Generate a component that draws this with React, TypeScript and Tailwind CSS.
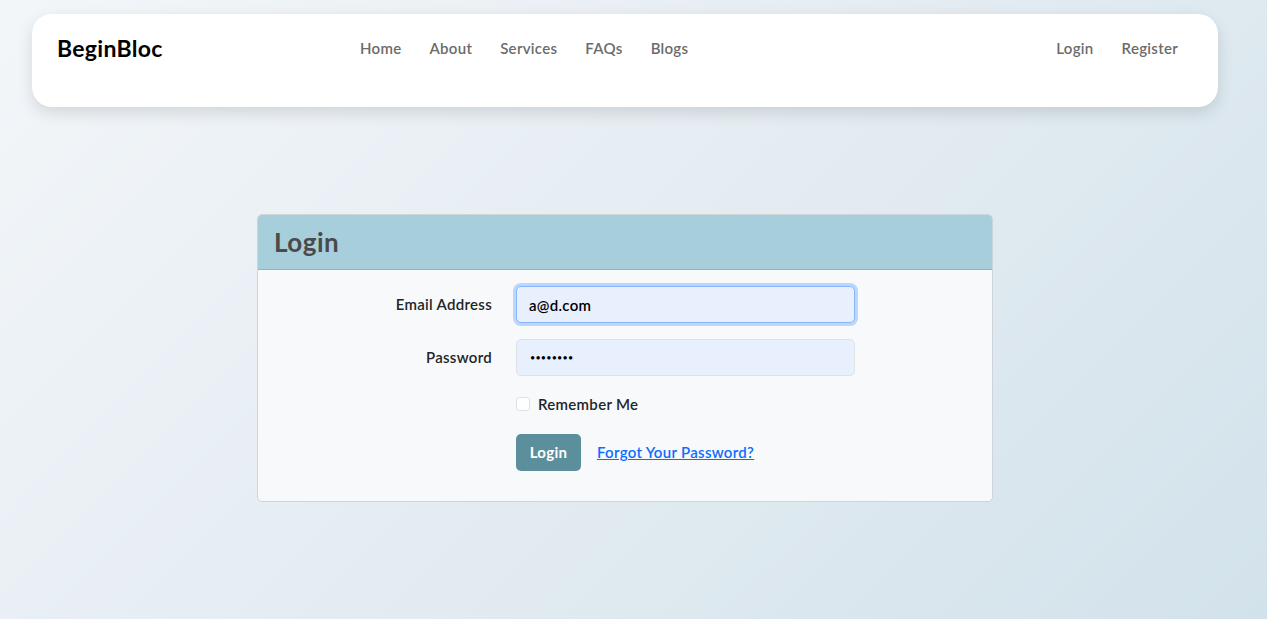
import React from "react";

const navLinks = ["Home", "About", "Services", "FAQs", "Blogs"];

const Navbar = () => {
  return (
    <nav className="mx-[32px] pt-[14px]">
      <div className="flex h-[93px] items-start rounded-[20px] bg-white pl-[25px] pr-[26px] pt-[20px] shadow-[0_6px_16px_rgba(0,0,0,0.12)]">
        <div className="flex h-[28px] w-[289px] items-center">
          <span className="text-[23px] font-bold tracking-[0.3px] text-black">BeginBloc</span>
        </div>
        <ul className="flex h-[28px] items-center">
          {navLinks.map((link) => (
            <li key={link} className="px-[14px] text-[15px] font-semibold tracking-[0.3px] text-[#6b6b6b]">
              {link}
            </li>
          ))}
        </ul>
        <ul className="ml-auto flex h-[28px] items-center">
          <li className="px-[14px] text-[15px] font-semibold tracking-[0.3px] text-[#6b6b6b]">Login</li>
          <li className="px-[14px] text-[15px] font-semibold tracking-[0.3px] text-[#6b6b6b]">Register</li>
        </ul>
      </div>
    </nav>
  );
};

const LoginCard = () => {
  return (
    <div className="mx-auto mt-[107px] w-[736px] overflow-hidden rounded-[5px] border border-[#cfd4d8] bg-[#f8f9fb]">
      <div className="flex h-[55px] items-center border-b border-[#8db5c2] bg-[#a7cedb] px-[16px]">
        <h1 className="text-[26px] font-bold tracking-[0.5px] text-[#4a4a4a]">Login</h1>
      </div>
      <div className="px-[16px] pb-[30px] pt-[16px]">
        <div className="mb-[16px] flex items-center">
          <label className="w-[218px] text-right text-[15px] font-semibold tracking-[0.3px] text-[#212529]">
            Email Address
          </label>
          <div className="ml-[24px] w-[339px]">
            <input
              readOnly
              value="a@d.com"
              className="h-[37px] w-full rounded-[5px] border border-[#86b7fe] bg-[#e8f0fe] px-[12px] text-[15px] font-semibold tracking-[0.3px] text-black shadow-[0_0_0_3px_rgba(13,110,253,0.25)] outline-none"
            />
          </div>
        </div>
        <div className="mb-[16px] flex items-center">
          <label className="w-[218px] text-right text-[15px] font-semibold tracking-[0.3px] text-[#212529]">
            Password
          </label>
          <div className="ml-[24px] w-[339px]">
            <input
              readOnly
              type="password"
              value="password"
              className="h-[37px] w-full rounded-[5px] border border-[#dee2e6] bg-[#e8f0fe] px-[13px] text-[9px] tracking-[0.2px] text-black outline-none"
            />
          </div>
        </div>
        <div className="mb-[18px] flex h-[24px] items-center pl-[242px]">
          <span className="h-[14px] w-[14px] rounded-[3px] border border-[#dee2e6] bg-white" />
          <span className="ml-[8px] text-[15px] font-semibold tracking-[0.3px] text-[#212529]">Remember Me</span>
        </div>
        <div className="flex items-center pl-[242px]">
          <button className="h-[37px] w-[65px] rounded-[5px] bg-[#5a8f9b] text-[15px] font-bold tracking-[0.3px] text-white">
            Login
          </button>
          <a href="#" className="ml-[16px] text-[15px] font-semibold tracking-[0.3px] text-[#0d6efd] underline">
            Forgot Your Password?
          </a>
        </div>
      </div>
    </div>
  );
};

const App = () => {
  return (
    <div
      className="h-[619px] w-full bg-[linear-gradient(135deg,#f3f6f9_0%,#e4ecf2_50%,#d2e2eb_100%)]"
      style={{ fontFamily: "Lato, 'Open Sans', sans-serif" }}
    >
      <div className="w-[1250px]">
        <Navbar />
        <LoginCard />
      </div>
    </div>
  );
};

export default App;
